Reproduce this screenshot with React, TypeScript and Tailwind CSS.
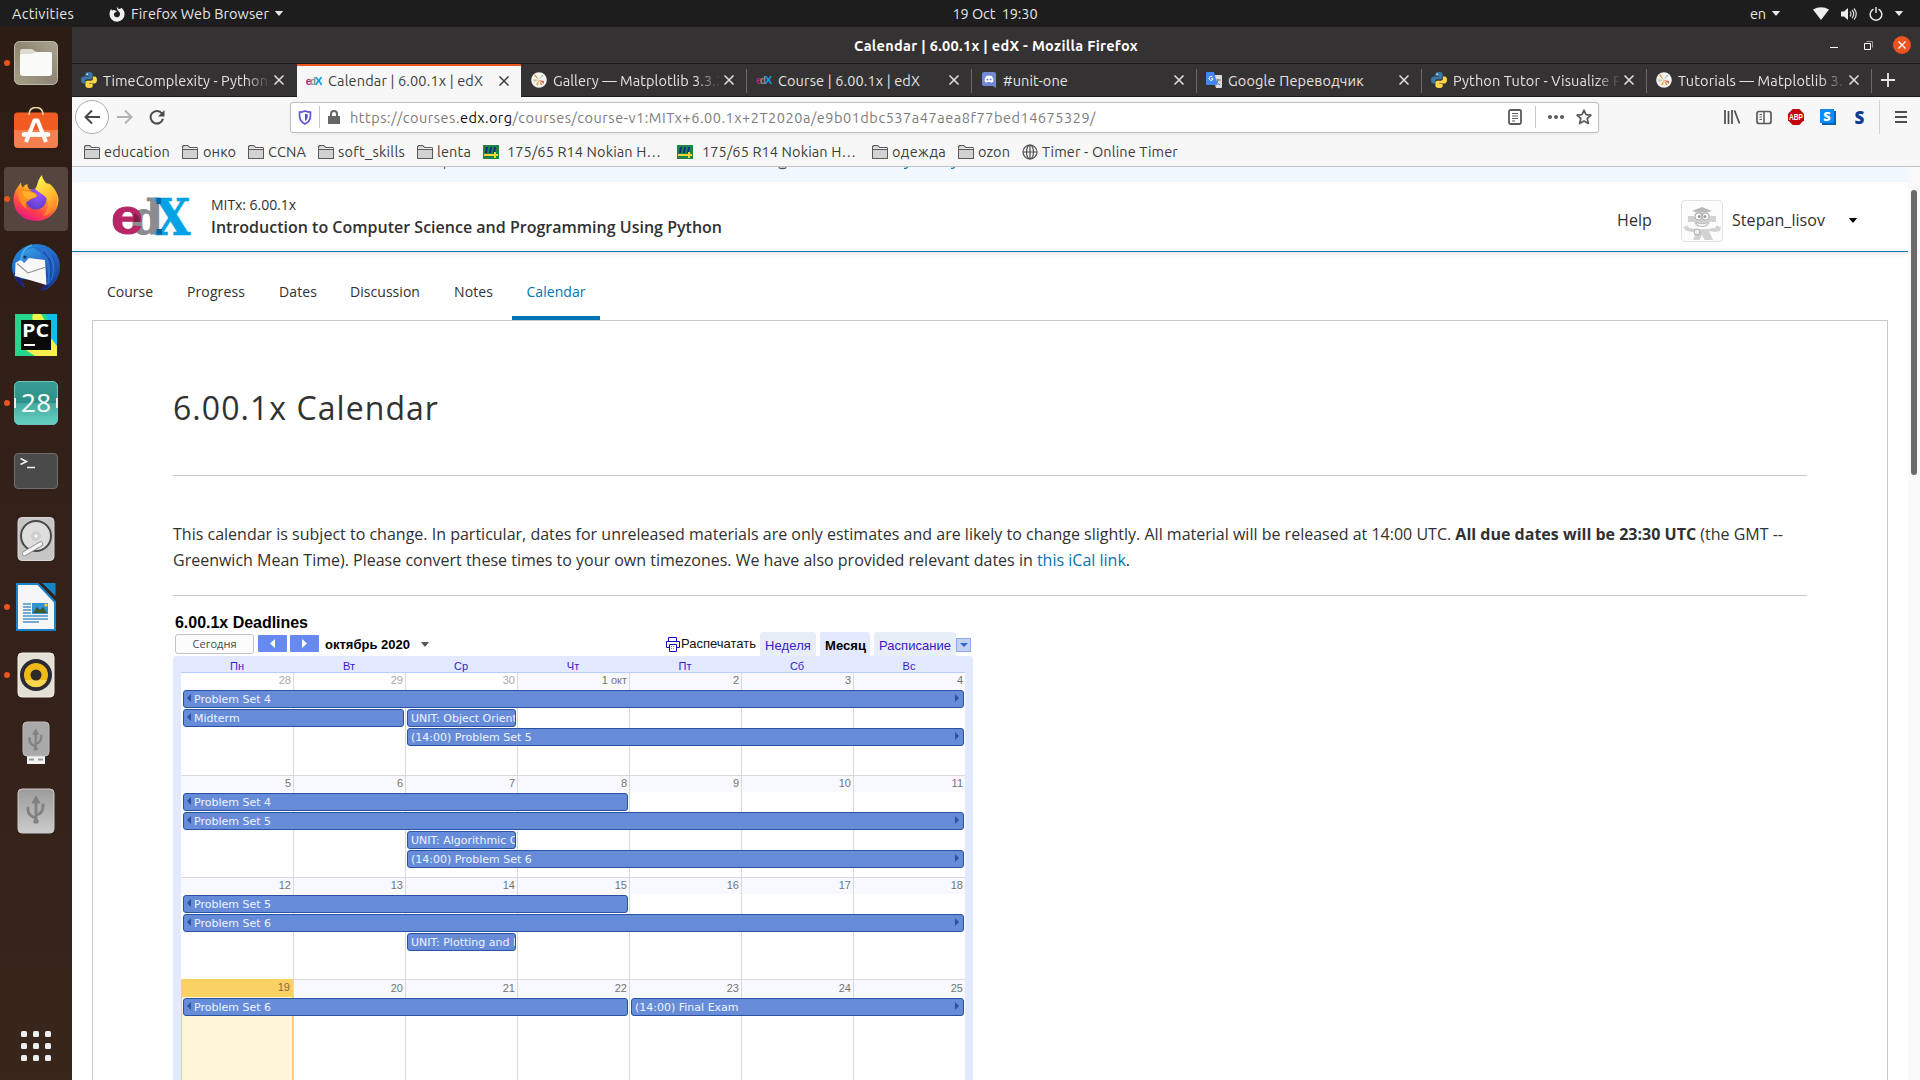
import React, { useLayoutEffect, useRef, type ReactNode } from "react";

/** One line of text, tracked so that it spans the given width. */
function Fit({ w, className = "", children }: { w: number; className?: string; children: ReactNode }) {
  const ref = useRef<HTMLSpanElement>(null);
  useLayoutEffect(() => {
    const el = ref.current;
    if (!el) return;
    el.style.letterSpacing = "0px";
    const n = (el.textContent ?? "").length;
    const natural = el.getBoundingClientRect().width;
    el.style.letterSpacing = `${(w - natural) / n}px`;
  }, [w]);
  return (
    <span ref={ref} className={`inline-block shrink-0 whitespace-pre ${className}`}>
      {children}
    </span>
  );
}

const Caret = ({ className = "" }: { className?: string }) => (
  <svg viewBox="0 0 10 6" className={`h-[5px] w-[10px] shrink-0 ${className}`} fill="currentColor">
    <path d="M0 0h10L5 6z" />
  </svg>
);

/* ---------- top bar ---------- */

function TopBar() {
  return (
    <div className="grid h-[27px] shrink-0 grid-cols-3 items-center bg-[#1d1d1d] text-[14.5px] leading-[27px] text-[#e6e6e6]">
      <div className="flex items-center pl-3">
        <Fit w={62}>Activities</Fit>
        <svg viewBox="0 0 16 16" className="ml-[35px] h-4 w-4" fill="#eee">
          <path d="M8 .5c.3 1.400 1 2 2.200 2.600C11.600 2.500 12.600 2 12.600 2c1.900 1.500 3 3.600 3 6.200A7.500 7.500 0 0 1 8 15.700 7.500 7.500 0 0 1 .5 8.200c0-2 .5-4 1.900-5.200.1.900.5 1.300.9 1.600C3.900 4 5 3.900 6 4.400L8 5 6.600 6.300l-1.200.8c-.6.9-.6 2.300.2 3.200 1.200 1.300 3.800 1.200 4.900-.4.9-1.500.6-3.400-.6-4.500C8.400 4.200 7.500 2.500 8 .5z" />
        </svg>
        <Fit w={138} className="ml-[6px]">Firefox Web Browser</Fit>
        <Caret className="ml-[5px]" />
      </div>
      <div className="flex justify-center pl-[72px]">
        <div className="-ml-[1px]"><Fit w={85} className="mr-[1px]">19 Oct  19:30</Fit></div>
      </div>
      <div className="flex items-center justify-end pr-[16px]">
        <Fit w={16}>en</Fit>
        <Caret className="ml-[5px]" />
        <svg viewBox="0 0 16 13" className="ml-8 h-[13px] w-4" fill="#eee"><path d="M0 2.500Q8-2 16 2.500L8 13z" /></svg>
        <svg viewBox="0 0 16 14" className="ml-3 h-[14px] w-4" fill="#eee">
          <path d="M0 4.500h3L7 1v12L3 9.500H0z" />
          <path d="M9 4.500q2 2.500 0 5M11 3q3.500 4 0 8M13 1.500q4.500 5.500 0 11" fill="none" stroke="#ddd" strokeWidth="1.200" />
        </svg>
        <svg viewBox="0 0 14 14" className="ml-3 h-[14px] w-[14px]" fill="none" stroke="#eee" strokeWidth="1.400">
          <path d="M4.500 2.200a5.800 5.800 0 1 0 5 0M7 0v6" />
        </svg>
        <Caret className="ml-[11px]" />
      </div>
    </div>
  );
}

/* ---------- dock ---------- */

const FilesIcon = () => (
  <svg viewBox="0 0 48 48" className="h-12 w-12">
    <defs><linearGradient id="fi" x1="0" y1="1" x2="1" y2="0"><stop stopColor="#a6a08a" /><stop offset=".5" stopColor="#8e8673" /><stop offset="1" stopColor="#aaa592" /></linearGradient></defs>
    <rect x="2.500" y="2.500" width="43" height="43" rx="5" fill="url(#fi)" stroke="#bdb8a8" />
    <path d="M8 12a2 2 0 0 1 2-2h10l4 3h14a2 2 0 0 1 2 2v4H8z" fill="#dedad0" />
    <path d="M8 17q0-2 2-2h10l4-2h14q2 0 2 2v19q0 3-3 3H11q-3 0-3-3z" fill="#fafaf9" />
  </svg>
);
const SoftwareIcon = () => (
  <svg viewBox="0 0 48 48" className="h-12 w-12">
    <path d="M2 9q0-3.500 3.500-3.500h37Q46 5.500 46 9v17H2z" fill="#f25c22" />
    <path d="M2 23h44v14q0 4-4 4H6q-4 0-4-4z" fill="#f48052" />
    <path d="M17 8q0-7.500 7-7.500T31 8" fill="none" stroke="#ecd5a8" strokeWidth="1.600" />
    <path d="M14 35 22.500 13.500h3L34 35M12 27.500h24" fill="none" stroke="#fff" strokeWidth="4" strokeLinejoin="round" />
    <path d="M12 27.500h24" stroke="#fff" strokeWidth="4.500" strokeLinecap="round" />
  </svg>
);
const FirefoxIcon = () => (
  <svg viewBox="0 1 48 48" className="h-12 w-12">
    <defs>
      <linearGradient id="ff1" x1=".8" y1=".1" x2=".3" y2="1"><stop stopColor="#fff04a" /><stop offset=".35" stopColor="#ff9a26" /><stop offset=".7" stopColor="#ff4048" /><stop offset="1" stopColor="#e3158d" /></linearGradient>
      <radialGradient id="ff2" cx=".6" cy=".3" r=".7"><stop stopColor="#9a55ff" /><stop offset="1" stopColor="#5b3fc6" /></radialGradient>
      <linearGradient id="ff3" x1=".3" y1="0" x2=".8" y2="1"><stop stopColor="#fff44f" /><stop offset=".6" stopColor="#ffb52b" /><stop offset="1" stopColor="#ff6a30" /></linearGradient>
    </defs>
    <path d="M9 8.500c.3 3 .8 4 2 5 1.500-2.500 2.500-3 4.500-3.500-.3 2 .5 4 2 5.500L40 14c4 3 6.500 7 6.500 12.500A22.500 21 0 0 1 24 47 22 21 0 0 1 1.500 26C1.500 18 5 14 9 8.500z" fill="url(#ff1)" />
    <circle cx="24" cy="25" r="10.500" fill="url(#ff2)" />
    <path d="M30 1c0 3 2 5 4 8 2 1 3 0 5 2 7 6 8 15 4 22-2 4-6 8-12 9 5-5 6-12 4-17-3-5-8-6-12-10 3-3 2-9 7-14z" fill="url(#ff3)" />
    <path d="M7 14c6 2 8 1 14 4 2 1 4 2 4 4-2 3-7 2-8 5-4 0-4 5-2 8-7-4-10-13-8-21z" fill="#ff8f20" />
    <path d="M10 17c5 0 12 1 15 5-3 2-6 1-8 3-3 0-6-3-7-8z" fill="#ffb02b" />
  </svg>
);
const ThunderbirdIcon = () => (
  <svg viewBox="0 0 48 48" className="h-12 w-12">
    <defs>
      <linearGradient id="tb" x1=".2" y1="0" x2=".8" y2="1"><stop stopColor="#2489d8" /><stop offset=".5" stopColor="#2363c4" /><stop offset="1" stopColor="#173a92" /></linearGradient>
      <linearGradient id="tb2" x1="0" y1="0" x2="1" y2="1"><stop stopColor="#3aa3e6" /><stop offset="1" stopColor="#2467c6" /></linearGradient>
    </defs>
    <path d="M24 1C10 2 1 11 0 23c0 9 5 18 13 22l-4-9 26 2-4 10c10-4 17-13 17-24C48 10 37 1 24 1z" fill="url(#tb)" />
    <path d="M2 29q1 12 12 17-4-4-4-9z" fill="#22206e" />
    <path d="M33 38q-2 7-6 10 6-1 10-5z" fill="#1f2476" />
    <path d="M9 20C8 10 14 5 24 5q7 5 10 13c-6-3-14-4-19-1-2 1-4 2-6 3z" fill="url(#tb2)" />
    <path d="M22 5c12-1 22 8 22 18 0 8-3 14-9 19 1-9 2-16-2-24C31 12 27 8 22 5z" fill="#2a6fce" />
    <path d="M3.500 20 9 16.500l3 3.500 5-5L33 17l1.500 25Q18 37 3 33z" fill="#f8f8f8" />
    <path d="M5 20.500 16 30l18-6" fill="none" stroke="#8d8d92" strokeWidth="1.100" />
    <path d="M36 14q7 9 2 24M40 12q6 10 1 24M31 9q10 7 7 26" fill="none" stroke="#1a4aa8" strokeWidth="1.100" />
    <path d="M9 18Q9 6 20 2" fill="none" stroke="#4ab0ee" strokeWidth="1.500" />
    <circle cx="13" cy="14" r="1.600" fill="#123a6e" />
  </svg>
);
const PyCharmIcon = () => (
  <svg viewBox="0 0 48 48" className="h-12 w-12">
    <path d="M3 3h42v42H3z" fill="#25d68c" />
    <path d="M20 3h9L45 30v15H24z" fill="#eef54a" />
    <path d="M34 3h11v34z" fill="#0cc0ea" />
    <path d="M3 45 12 36h27l6-10v19z" fill="#f7f04c" />
    <path d="M45 3v32l-6-8V3z" fill="#0cc0ea" />
    <path d="M3 3h18L9 40l-6 5z" fill="#25d68c" />
    <path d="M3 45V32l20 13z" fill="#25d68c" />
    <path d="M9 9h30v30H9z" fill="#0a0a0a" />
    <text x="10" y="26" fontSize="18" fontWeight="700" textLength="27" lengthAdjust="spacingAndGlyphs" fill="#fff" fontFamily="Open Sans, sans-serif">PC</text>
    <path d="M12 33h11v2H12z" fill="#fff" />
  </svg>
);
const CalendarIcon = () => (
  <svg viewBox="0 0 48 48" className="h-12 w-12">
    <defs><linearGradient id="ca" x1="0" y1="0" x2="0" y2="1"><stop stopColor="#379d94" /><stop offset=".5" stopColor="#2e9088" /><stop offset=".5" stopColor="#46a99f" /><stop offset="1" stopColor="#64d1c0" /></linearGradient></defs>
    <rect x="2.500" y="2.500" width="43" height="43" rx="4.500" fill="url(#ca)" stroke="#6cc4ba" />
    <path d="M2 19h2v10H2zM44 19h2v10h-2z" fill="#e6eeee" />
    <text x="24" y="33" textAnchor="middle" fontSize="26" textLength="30" fill="#f3fbfa" fontFamily="Noto Sans, sans-serif">28</text>
  </svg>
);
const TerminalIcon = () => (
  <svg viewBox="0 0 48 48" className="h-12 w-12">
    <rect x="2.500" y="6.500" width="43" height="35" rx="3.500" fill="#4a4a4a" stroke="#6e6e6e" />
    <path d="m8.500 11.500 6 3-6 3M15 20.500h8" fill="none" stroke="#f2f2f2" strokeWidth="1.600" />
  </svg>
);
const DiskIcon = () => (
  <svg viewBox="0 0 48 48" className="h-12 w-12">
    <rect x="6" y="2.500" width="36" height="43" rx="4" fill="#c6c6c6" stroke="#d9d9d9" />
    <circle cx="24" cy="21" r="15" fill="#dededc" stroke="#484848" strokeWidth="2" />
    <circle cx="24" cy="21" r="5" fill="#cfcfcf" /><circle cx="24" cy="21" r="1.500" fill="#fff" />
    <path d="m12.500 38.500 16-9.500" stroke="#888" strokeWidth="5" strokeLinecap="round" />
    <path d="m12.500 38.500 16-9.500" stroke="#f4f4f4" strokeWidth="3.600" strokeLinecap="round" />
  </svg>
);
const WriterIcon = () => (
  <svg viewBox="0 0 48 48" className="h-12 w-12">
    <path d="M5 1h21l17 18v28H5z" fill="#f6f6f8" stroke="#1a83c8" strokeWidth="2" />
    <path d="M30 0h13.500v13z" fill="#1585c9" />
    <path d="M11 21h8M11 24h8M11 27h8M11 30h8M11 33h25M11 36h25M11 39h16" stroke="#4a92c6" strokeWidth="1.400" />
    <path d="M20 20h16v11H20z" fill="#3592ce" />
    <path d="m21 30 4-6 3 3 3-3 4 6z" fill="#3b5a31" />
    <circle cx="34" cy="22" r="1.600" fill="#f5d33c" />
  </svg>
);
const RhythmboxIcon = () => (
  <svg viewBox="0 0 48 48" className="h-12 w-12">
    <rect x="6" y="2" width="36" height="44" rx="4" fill="#e4e0d5" stroke="#f0ede4" />
    <circle cx="24" cy="24" r="16" fill="#2a2b33" />
    <circle cx="24" cy="24" r="12" fill="#efb916" />
    <path d="M13 29a12 12 0 0 0 22 0z" fill="#f9d650" />
    <circle cx="24" cy="24" r="5.500" fill="#2d2b27" />
  </svg>
);
const UsbGlyph = () => (
  <g fill="none" stroke="#828282" strokeWidth="3">
    <path d="M24 14v20M24 31q-8-2-8-9M24 28q7-1 7-9" />
    <path d="m24 9 4 7h-8zM22 33h4v3h-4zM15 20h2v2h-2zM30 17h2v2h-2z" fill="#828282" strokeWidth="1" />
  </g>
);
const UsbStickIcon = () => (
  <svg viewBox="0 0 48 48" className="h-12 w-12">
    <path d="M15 37h18v8H15z" fill="#f3f3f3" />
    <path d="M17 39.500h5v2h-5zM26 39.500h5v2h-5z" fill="#999" />
    <rect x="11" y="3" width="26" height="34" rx="4" fill="#a9a9a9" stroke="#bdbdbd" />
    <g transform="translate(5 3) scale(.78)"><UsbGlyph /></g>
  </svg>
);
const UsbDriveIcon = () => (
  <svg viewBox="0 0 48 48" className="h-12 w-12">
    <defs><linearGradient id="ud" x1="0" y1="0" x2="0" y2="1"><stop stopColor="#9c9c9c" /><stop offset="1" stopColor="#cbcbcb" /></linearGradient></defs>
    <rect x="6" y="2" width="36" height="44" rx="4" fill="url(#ud)" stroke="#c8c8c8" />
    <UsbGlyph />
  </svg>
);

const dock: { Icon: () => ReactNode; running?: boolean; active?: boolean }[] = [
  { Icon: FilesIcon, running: true },
  { Icon: SoftwareIcon },
  { Icon: FirefoxIcon, running: true, active: true },
  { Icon: ThunderbirdIcon },
  { Icon: PyCharmIcon },
  { Icon: CalendarIcon, running: true },
  { Icon: TerminalIcon },
  { Icon: DiskIcon },
  { Icon: WriterIcon, running: true },
  { Icon: RhythmboxIcon, running: true },
  { Icon: UsbStickIcon },
  { Icon: UsbDriveIcon },
];

function Dock() {
  return (
    <div className="flex w-[72px] shrink-0 flex-col items-center bg-linear-to-b from-[#2d1c14] via-[#33211a] to-[#38261b] pt-[2px]">
      {dock.map(({ Icon, running, active }, i) => (
        <div key={i} className="relative flex h-[68px] w-full items-center justify-center">
          {active && <div className="absolute inset-x-1 inset-y-[2px] rounded bg-[#55453e]" />}
          {running && <div className="absolute left-1 h-[6px] w-[6px] rounded-full bg-[#e95420]" />}
          <div className="relative"><Icon /></div>
        </div>
      ))}
      <div className="mt-auto mb-[19px] grid grid-cols-3 gap-[6px]">
        {Array.from({ length: 9 }, (_, i) => (
          <div key={i} className="h-[6px] w-[6px] rounded-[1.500px] bg-[#eee]" />
        ))}
      </div>
    </div>
  );
}

/* ---------- browser window ---------- */

const PythonIcon = () => (
  <svg viewBox="0 0 16 16" className="h-4 w-4 shrink-0">
    <path d="M8 0C4.500 0 4.300 1 4.300 2.200V4H8v.6H2.500C1 4.600 0 6 0 8s.8 3.400 2.200 3.400H4V9.500C4 8.200 5 7.200 6.200 7.200h3.600c1 0 1.800-.8 1.800-1.800V2.200C11.600 1 10.800 0 8 0z" fill="#3b77a8" />
    <path d="M8 16c3.500 0 3.700-1 3.700-2.200V12H8v-.6h5.500C15 11.400 16 10 16 8s-.8-3.400-2.200-3.400H12v1.900c0 1.300-1 2.300-2.200 2.300H6.200c-1 0-1.800.8-1.800 1.800v3.200C4.400 15 5.200 16 8 16z" fill="#ffd545" />
    <circle cx="6.200" cy="2.200" r=".8" fill="#fff" />
  </svg>
);
const EdxMini = () => (
  <svg viewBox="0 0 16 16" className="h-4 w-4 shrink-0" fontWeight="700">
    <text x="-.3" y="12" fontSize="10" textLength="6" lengthAdjust="spacingAndGlyphs" fill="#b3246b" fontFamily="Liberation Sans, sans-serif">e</text>
    <text x="4" y="12" fontSize="10" textLength="6" lengthAdjust="spacingAndGlyphs" fill="#8a8c8f" fontFamily="Liberation Sans, sans-serif">d</text>
    <text x="8.500" y="12" fontSize="11" textLength="8" lengthAdjust="spacingAndGlyphs" fill="#0a9bdc" fontFamily="Liberation Sans, sans-serif">X</text>
  </svg>
);
const MatplotIcon = () => (
  <svg viewBox="0 0 16 16" className="h-4 w-4 shrink-0">
    <circle cx="8" cy="8" r="7.800" fill="#f3f3f0" />
    <path d="M8 8 3 3.500 4.500 2.500z" fill="#e0913c" /><path d="M8 8 2 7l1 3z" fill="#c8c9a0" />
    <path d="m8 8 5 4 0-3z" fill="#d76a4a" /><path d="m8 8 4.500-5-2 0z" fill="#9bbfae" />
    <path d="M8 8 5 12.500l2 1z" fill="#ef9f3d" /><path d="m8 8 2 5.500 1.500-1z" fill="#e67f3a" />
  </svg>
);
const DiscordIcon = () => (
  <svg viewBox="0 0 16 16" className="h-4 w-4 shrink-0">
    <path d="M3 0h10q2 0 2 2v14l-3-2H3q-2 0-2-2V2q0-2 2-2z" fill="#7289da" />
    <path d="M5 4q3-1 6 0 1.500 2.500 1.300 5.500-1 1-2.300 1.200L9.500 10h-3l-.6.700Q4.600 10.500 3.700 9.500 3.500 6.500 5 4z" fill="#fff" />
    <circle cx="6.500" cy="7.500" r="1" fill="#7289da" /><circle cx="9.600" cy="7.500" r="1" fill="#7289da" />
  </svg>
);
const TranslateIcon = () => (
  <svg viewBox="0 0 16 16" className="h-4 w-4 shrink-0">
    <path d="M6 3h9q1 0 1 1v11q0 1-1 1h-5z" fill="#dcdcdc" />
    <path d="M9 8h6M12 7v1q0 3-3 5M10 9q1 2 4 4" stroke="#607988" fill="none" strokeWidth="1" />
    <path d="M1 0h7l3.500 13H1q-1 0-1-1V1q0-1 1-1z" fill="#4285f4" />
    <path d="M6.500 5A2 2 0 1 0 7 6.800H5" fill="none" stroke="#fff" />
  </svg>
);
const CloseX = () => (
  <svg viewBox="0 0 10 10" className="h-[10px] w-[10px] shrink-0" stroke="currentColor" strokeWidth="1.500"><path d="m.5.5 9 9m0-9-9 9" /></svg>
);

const tabs: { Icon: () => ReactNode; title: string; w: number; active?: boolean; sep?: boolean; fade?: boolean }[] = [
  { Icon: PythonIcon, title: "TimeComplexity - Python", w: 165, fade: true },
  { Icon: EdxMini, title: "Calendar | 6.00.1x | edX", w: 155, active: true },
  { Icon: MatplotIcon, title: "Gallery — Matplotlib 3.3.2", w: 171, sep: true, fade: true },
  { Icon: EdxMini, title: "Course | 6.00.1x | edX", w: 142, sep: true },
  { Icon: DiscordIcon, title: "#unit-one", w: 65, sep: true },
  { Icon: TranslateIcon, title: "Google Переводчик", w: 136, sep: true },
  { Icon: PythonIcon, title: "Python Tutor - Visualize Py", w: 176, sep: true, fade: true },
  { Icon: MatplotIcon, title: "Tutorials — Matplotlib 3.3", w: 173, sep: true, fade: true },
];

function TabStrip() {
  return (
    <div className="flex h-[34px] border-t border-b border-[#1b1a1a] bg-[#353233] text-[14.500px]">
      {tabs.map(({ Icon, title, w, active, sep, fade }) => (
        <div
          key={title}
          className={
            active
              ? "relative -mb-px flex w-[224px] items-center bg-[#f7f7f7] pl-[9px] text-[#3d3d3d] shadow-[inset_0_2px_0_#e95420]"
              : "relative flex w-[225px] items-center pl-[9px] text-[#e4e2e0] nth-3:ml-[1px] nth-3:w-[225px]"
          }
        >
          <Icon />
          <div
            className={
              "ml-[6px] w-[166px] overflow-hidden" +
              (active ? "" : " pt-[2px]") +
              (fade ? " [mask-image:linear-gradient(to_right,#000_86%,transparent_101%)]" : "")
            }
          >
            <Fit w={w} className="align-top leading-[24px]">{title}</Fit>
          </div>
          <div className="ml-[5px]"><CloseX /></div>
          {sep && <div className="absolute right-0 top-[5px] h-6 w-px bg-[#6b696a]" />}
        </div>
      ))}
      <svg viewBox="0 0 14 14" className="mt-[9px] ml-[9px] h-[14px] w-[14px]" stroke="#e8e8e8" strokeWidth="1.800"><path d="M7 0v14M0 7h14" /></svg>
    </div>
  );
}

function Toolbar() {
  return (
    <div className="flex h-10 items-center bg-[#f7f7f7]">
      <div className="ml-[3px] flex h-[34px] w-[34px] items-center justify-center rounded-full border border-[#adadad] bg-white">
        <svg viewBox="0 0 16 16" className="h-4 w-4" fill="none" stroke="#4a4a4a" strokeWidth="2"><path d="M16 8H1.500M8 1.500 1.500 8 8 14.500" /></svg>
      </div>
      <svg viewBox="0 0 16 16" className="ml-2 h-4 w-4" fill="none" stroke="#b3b3b3" strokeWidth="2"><path d="M0 8h14.500M8 1.500 14.500 8 8 14.500" /></svg>
      <svg viewBox="0 0 16 16" className="ml-4 h-4 w-4" fill="none" stroke="#4a4a4a" strokeWidth="2">
        <path d="M13 4.500A6.300 6.300 0 1 0 14 9.800" /><path d="M15.500 1v6.500H9z" fill="#4a4a4a" stroke="none" />
      </svg>
      <div className="ml-[125px] flex h-[31px] w-[1309px] items-center rounded-[3px] border border-[#bfbfbf] bg-white shadow-[0_1px_3px_#0001]">
        <svg viewBox="0 0 14 16" className="ml-[7px] h-[15px] w-[14px]">
          <path d="M7 1q3 1.200 5.800 1.200v4q0 6-5.800 8.800Q1.200 12.200 1.200 6.200v-4Q4 2.200 7 1z" fill="none" stroke="#5a57d8" strokeWidth="1.800" />
          <path d="M7 4q1.500.6 3 .7v2Q9.800 10 7 12z" fill="#5648d8" />
        </svg>
        <div className="ml-[7px] h-[22px] w-px bg-[#c8c8c8]" />
        <svg viewBox="0 0 12 14" className="ml-[8px] h-[14px] w-3"><path d="M0 6h12v8H0z" fill="#666" /><path d="M3 7V4a3 3 0 0 1 6 0v3" fill="none" stroke="#666" strokeWidth="2" /></svg>
        <div className="ml-[10px] flex pt-px text-[14.500px] leading-[30px] text-[#7c7c7c]">
          <Fit w={110}>https://courses.</Fit>
          <Fit w={52.5} className="text-[#0c0c0d]">edx.org</Fit>
          <Fit w={583.5}>/courses/course-v1:MITx+6.00.1x+2T2020a/e9b01dbc537a47aea8f77bed14675329/</Fit>
        </div>
        <div className="mr-[6px] ml-auto flex items-center">
          <svg viewBox="0 0 14 16" className="h-4 w-[14px]" fill="none" stroke="#5a5a5a"><rect x="1" y="1" width="12" height="14" rx="1.500" strokeWidth="1.800" /><path d="M4 4.500h6M4 7h6M4 9.500h6M4 12h3" /></svg>
          <div className="ml-[13px] h-[22px] w-px bg-[#c8c8c8]" />
          <svg viewBox="0 0 16 4" className="ml-3 h-1 w-4" fill="#5a5a5a"><circle cx="2" cy="2" r="2" /><circle cx="8" cy="2" r="2" /><circle cx="14" cy="2" r="2" /></svg>
          <svg viewBox="0 0 16 16" className="ml-3 h-4 w-4" fill="none" stroke="#5a5a5a" strokeWidth="1.700" strokeLinejoin="round"><path d="m8 1.200 2 4.500 5 .5-3.800 3.300 1.200 5L8 12l-4.400 2.500 1.200-5L1 6.200l5-.5z" /></svg>
        </div>
      </div>
      <svg viewBox="0 0 16 14" className="ml-[125px] h-[14px] w-4" fill="none" stroke="#4d4d4d" strokeWidth="1.700"><path d="M1 0v14M4.500 1v13M8 0v14M10.500.5l5 13" /></svg>
      <svg viewBox="0 0 16 14" className="ml-4 h-[15px] w-4" fill="none" stroke="#5a5a5a"><rect x="1" y="1" width="14" height="12" rx="2" strokeWidth="1.700" /><path d="M8 1v12" strokeWidth="1.500" /><path d="M3.500 4H6M3.500 6.500H6M3.500 9H6" /></svg>
      <svg viewBox="0 0 16 16" className="ml-4 h-4 w-4"><path d="M4.700 0h6.600L16 4.700v6.600L11.300 16H4.700L0 11.300V4.700z" fill="#c4040c" /><text x="8" y="11.300" textAnchor="middle" fontSize="9" fontWeight="700" textLength="14" lengthAdjust="spacingAndGlyphs" fill="#fff" fontFamily="Liberation Sans, sans-serif">ABP</text></svg>
      <svg viewBox="0 0 16 16" className="ml-4 h-4 w-4"><path d="M2 2h14v14H2z" fill="#0861b0" /><path d="M0 0h14v14H0z" fill="#0a8cff" /><text x="7" y="11.500" textAnchor="middle" fontSize="13" fontWeight="800" fill="#fff" fontFamily="Open Sans, sans-serif">S</text></svg>
      <span className="ml-[18px] w-[11px] text-center font-['Open_Sans'] text-[17px] leading-none font-extrabold text-[#0b3d91]">S</span>
      <div className="ml-[14px] h-[34px] w-px bg-[#d2d2d2]" />
      <svg viewBox="0 0 12 12" className="ml-[15px] h-3 w-3" stroke="#4d4d4d" strokeWidth="2"><path d="M0 1h12M0 6h12M0 11h12" /></svg>
    </div>
  );
}

const FolderMark = () => (
  <svg viewBox="0 0 16 14" className="h-[14px] w-4 shrink-0"><path d="M.5 13.500V2Q.5.500 2 .5h4l1.500 2h7q1 0 1 1v10z" fill="#d2d2d2" stroke="#595959" /><path d="M1 3.500h6.500V2l7.500 1v1.500H1z" fill="#f7f7f7" /><path d="M.5 13.500V2Q.5.500 2 .5h4l1.500 2h7q1 0 1 1v10zM.5 4.500h15" fill="none" stroke="#595959" /></svg>
);
const TyreMark = () => (
  <svg viewBox="0 0 16 14" className="h-[14px] w-4 shrink-0"><path d="M0 0h16v14H0z" fill="#1c8444" /><path d="m3 2-1 6h2l1-6zm4 0L6 8h2l1-6zm4 0-1 6h2l1-6z" fill="#152c86" /><path d="M1 9h10V7h2v2h2v2h-2v2h-2v-2H1z" fill="#f5d338" /></svg>
);
const GlobeMark = () => (
  <svg viewBox="0 0 16 16" className="h-4 w-4 shrink-0" fill="none" stroke="#4d4d4d" strokeWidth="1.200"><circle cx="8" cy="8" r="7" /><ellipse cx="8" cy="8" rx="3.500" ry="7" /><path d="M1 8h14M8 1v14" /></svg>
);

const bookmarks: [() => ReactNode, string, number, string, string][] = [
  [FolderMark, "education", 66, "ml-3", "ml-1"],
  [FolderMark, "онко", 33, "ml-3", "ml-[5px]"],
  [FolderMark, "CCNA", 38, "ml-3", "ml-1"],
  [FolderMark, "soft_skills", 67, "ml-3", "ml-1"],
  [FolderMark, "lenta", 34, "ml-3", "ml-1"],
  [TyreMark, "175/65 R14 Nokian H…", 154, "ml-3", "ml-2"],
  [TyreMark, "175/65 R14 Nokian H…", 154, "ml-4", "ml-[9px]"],
  [FolderMark, "одежда", 54, "ml-4", "ml-1"],
  [FolderMark, "ozon", 32, "ml-3", "ml-1"],
  [GlobeMark, "Timer - Online Timer", 136, "ml-3", "ml-1"],
];

function Bookmarks() {
  return (
    <div className="flex h-[30px] items-center border-b border-[#c2c2c2] bg-[#f7f7f7] text-[14.500px] leading-[29px] text-[#3d3d3d]">
      {bookmarks.map(([Icon, label, w, gap, inner], i) => (
        <div key={i} className={`flex items-center ${gap}`}>
          <Icon />
          <Fit w={w} className={inner}>{label}</Fit>
        </div>
      ))}
    </div>
  );
}

/* ---------- course page ---------- */

const EdxLogo = () => (
  <svg viewBox="0 0 78 38" className="h-[38px] w-[78px] shrink-0 overflow-visible" fontWeight="700">
    <text x="18" y="36" fontSize="47" textLength="32" lengthAdjust="spacingAndGlyphs" fill="#8a8c8f" stroke="#8a8c8f" strokeWidth="1" fontFamily="DejaVu Serif, serif">d</text>
    <text x="-2" y="36" fontSize="50" textLength="32" lengthAdjust="spacingAndGlyphs" fill="#b72667" stroke="#b72667" strokeWidth="1" fontFamily="Liberation Sans, sans-serif">e</text>
    <text x="41.500" y="36.500" fontSize="49.500" textLength="36" lengthAdjust="spacingAndGlyphs" fill="#02a2e4" stroke="#02a2e4" strokeWidth=".6" fontFamily="DejaVu Serif, serif">X</text>
    <path d="M21.500 15.500q5.500 2 5.500 8.500h-6q-.8-4 .5-8.500z" fill="#7d1f42" />
    <path d="M43.500 31h5.500v5.500h-5.500zM43.500 0H48v6h-4.500z" fill="#0463a0" />
  </svg>
);

const Avatar = () => (
  <svg viewBox="0 0 40 40" className="h-10 w-10" fill="#d2d2d2">
    <path d="m10 10 10-4 10 4-10 3z" fill="#b9b9b9" />
    <path d="M14 11h12l2 4h6v6h-6q-1 5-8 5t-8-5H6v-6h6z" />
    <circle cx="16.500" cy="15.500" r="3.500" fill="#fff" stroke="#aaa" /><circle cx="23.500" cy="15.500" r="3.500" fill="#fff" stroke="#aaa" />
    <circle cx="17.200" cy="15.500" r="1.500" fill="#999" /><circle cx="22.800" cy="15.500" r="1.500" fill="#999" />
    <path d="M14 21.500q6 3 12 0-1 4-6 4t-6-4z" fill="#fff" stroke="#aaa" strokeWidth=".7" />
    <path d="M1 25l2 1 2-2 2 3 7 1h12l7-1 2-3 2 2 2-1-1 5-5 1-6-1 4 9H11l3-9-5 1-6-2z" />
    <circle cx="15" cy="31" r="3" fill="#eee" stroke="#aaa" />
    <path d="m20 34-2.500 5h5z" fill="#fff" />
  </svg>
);

const courseTabs: [string, number, string][] = [
  ["Course", 46, "ml-[35px]"],
  ["Progress", 58, "ml-[34px]"],
  ["Dates", 38, "ml-[34px]"],
  ["Discussion", 70, "ml-[33px]"],
  ["Notes", 39, "ml-[34px]"],
];

type CalEvent = { label: string; col: string; row: string; prev?: boolean; next?: boolean };
const weeks: { days: string[]; muted?: number; today?: boolean; events: CalEvent[] }[] = [
  {
    days: ["28", "29", "30", "1 окт", "2", "3", "4"],
    muted: 3,
    events: [
      { label: "Problem Set 4", col: "col-start-1 col-span-7", row: "row-start-1", prev: true, next: true },
      { label: "Midterm", col: "col-start-1 col-span-2", row: "row-start-2", prev: true },
      { label: "UNIT: Object Oriented", col: "col-start-3 col-span-1", row: "row-start-2" },
      { label: "(14:00) Problem Set 5", col: "col-start-3 col-span-5", row: "row-start-3", next: true },
    ],
  },
  {
    days: ["5", "6", "7", "8", "9", "10", "11"],
    events: [
      { label: "Problem Set 4", col: "col-start-1 col-span-4", row: "row-start-1", prev: true },
      { label: "Problem Set 5", col: "col-start-1 col-span-7", row: "row-start-2", prev: true, next: true },
      { label: "UNIT: Algorithmic Complexity", col: "col-start-3 col-span-1", row: "row-start-3" },
      { label: "(14:00) Problem Set 6", col: "col-start-3 col-span-5", row: "row-start-4", next: true },
    ],
  },
  {
    days: ["12", "13", "14", "15", "16", "17", "18"],
    events: [
      { label: "Problem Set 5", col: "col-start-1 col-span-4", row: "row-start-1", prev: true },
      { label: "Problem Set 6", col: "col-start-1 col-span-7", row: "row-start-2", prev: true, next: true },
      { label: "UNIT: Plotting and More", col: "col-start-3 col-span-1", row: "row-start-3" },
    ],
  },
  {
    days: ["19", "20", "21", "22", "23", "24", "25"],
    today: true,
    events: [
      { label: "Problem Set 6", col: "col-start-1 col-span-4", row: "row-start-1", prev: true },
      { label: "(14:00) Final Exam", col: "col-start-5 col-span-3", row: "row-start-1", next: true },
    ],
  },
];

function dayHead(isToday: boolean, isMuted: boolean, lastWeek: boolean) {
  if (isToday) return "h-[17px] bg-[#fad163] pr-[2px] leading-[14px] text-[#7d6f4c]";
  if (isMuted) return "h-4 pr-[2px] leading-[14px] text-[#aaa]";
  if (lastWeek) return "h-[17px] bg-[#f8f9ff] pr-[2px] leading-[16px] text-[#747474]";
  return "h-4 bg-[#f8f9ff] pr-[2px] leading-[14px] text-[#747474]";
}

function Calendar() {
  return (
    <div className="w-[800px] font-['Liberation_Sans',Arial,sans-serif] text-black">
      <div className="pt-[17px] pl-[2px] text-[16px] leading-[19px] font-bold"><Fit w={133}>6.00.1x Deadlines</Fit></div>
      <div className="flex h-6 pl-[2px]">
        <div className="mt-[2px] flex h-5 w-[79px] items-center justify-center rounded-[3px] border border-[#c3c3c3] bg-[#fcfcfc] font-['Open_Sans'] text-[11px] text-[#4a4a4a]"><Fit w={44}>Сегодня</Fit></div>
        <div className="mt-[3px] ml-1 flex h-[17px] w-[29px] items-center justify-center rounded-[1px] bg-[#668af0]"><svg viewBox="0 0 5 9" className="h-[9px] w-[5px]"><path d="M5 0v9L0 4.500z" fill="#fff" /></svg></div>
        <div className="mt-[3px] ml-[3px] flex h-[17px] w-[29px] items-center justify-center rounded-[1px] bg-[#668af0]"><svg viewBox="0 0 5 9" className="h-[9px] w-[5px]"><path d="M0 0v9l5-4.500z" fill="#fff" /></svg></div>
        <Fit w={85} className="ml-[6px] text-[13px] leading-[25px] font-bold">октябрь 2020</Fit>
        <Caret className="mt-[10px] ml-[10px] text-[#5a5a5a]" />
        <svg viewBox="0 0 14 15" className="mt-[5px] ml-[236px] h-[15px] w-[14px]" fill="#fff" stroke="#1010b8">
          <path d="M2.500 4V.5h8V4" /><path d="M.5 10.500v-6h13v6z" /><path d="M3.500 7.500h7v7h-7z" /><path d="M5 9.500h4M5 11.500h4" stroke="#8888aa" strokeDasharray="1 1" />
        </svg>
        <Fit w={75} className="ml-[1px] text-[13px] leading-6 text-[#111]">Распечатать</Fit>
        <div className="ml-[4px] flex text-[13px] leading-[27px] text-[#3b18c8]">
          <div className="w-14 rounded-t-[3px] bg-[#e8eef7] pl-[5px]"><Fit w={46}>Неделя</Fit></div>
          <div className="ml-1 w-[50px] rounded-t-[3px] bg-[#e3e9ff] pl-[5px] font-bold text-black"><Fit w={41}>Месяц</Fit></div>
          <div className="ml-1 w-[82px] rounded-t-[3px] bg-[#e8eef7] pl-[5px]"><Fit w={72}>Расписание</Fit></div>
        </div>
        <div className="mt-[6px] flex h-[14px] w-[15px] items-center justify-center border border-[#8fa9e4] bg-[#c3d0ee]"><svg viewBox="0 0 8 4" className="h-1 w-2"><path d="M0 0h8L4 4z" fill="#2d66d2" /></svg></div>
      </div>
      <div className="rounded-t-[3px] bg-[#e3e9ff] px-2">
        <div className="grid h-[17px] grid-cols-7 border-b border-[#b8ccff] text-center text-[11px] leading-[21px] text-[#3b18c8]">
          {["Пн", "Вт", "Ср", "Чт", "Пт", "Сб", "Вс"].map((d) => <div key={d} className="h-4">{d}</div>)}
        </div>
        {weeks.map(({ days, muted = 0, today, events }, wi) => (
          <div key={wi} className={wi === 0 ? "relative h-[102px] bg-white" : "relative h-[102px] border-t border-[#d9d9dc] bg-white"}>
            <div className="absolute inset-0 grid grid-cols-7">
              {days.map((d, i) => {
                const isToday = Boolean(today) && i === 0;
                return (
                  <div key={d} className={isToday ? "-mt-px border border-[#fad163] bg-[#fff7d7]" : i > 0 ? "border-l border-[#d9d9dc]" : ""}>
                    <div className={`text-right text-[11px] ${dayHead(isToday, i < muted, Boolean(today))}`}>{d}</div>
                  </div>
                );
              })}
            </div>
            <div className={today ? "relative grid auto-rows-[19px] grid-cols-7 pt-[18px]" : "relative grid auto-rows-[19px] grid-cols-7 pt-[17px]"}>
              {events.map((e) => (
                <div
                  key={e.label}
                  className={`${e.col} ${e.row} relative mr-[1px] ml-[2px] h-[18px] overflow-hidden rounded-[3px] border border-[#2952a3] bg-[#668cd9] font-['DejaVu_Sans',Verdana,sans-serif] text-[11px] leading-[17px] whitespace-nowrap text-[#eef3ff] ${e.prev ? "pl-[10px]" : "pl-[3px]"}`}
                >
                  {e.prev && <svg viewBox="0 0 4 8" className="absolute top-[3px] left-[3px] h-2 w-1"><path d="M4 0v8L0 4z" fill="#2952a3" /></svg>}
                  {e.label}
                  {e.next && <svg viewBox="0 0 4 8" className="absolute top-[3px] right-1 h-2 w-1"><path d="M0 0v8l4-4z" fill="#2952a3" /></svg>}
                </div>
              ))}
            </div>
          </div>
        ))}
      </div>
    </div>
  );
}

function CoursePage() {
  return (
    <div className="min-w-0 flex-1 overflow-hidden bg-white font-['Open_Sans','Noto_Sans',sans-serif] text-[#313131]">
      <div className="h-[15px] overflow-hidden bg-[#f2f8ff]">
        <svg viewBox="0 0 1000 3" className="h-[3px] w-[1000px]" fill="none" strokeWidth="1.300">
          <path d="M372.500 0v2" stroke="#666" />
          <path d="M707 .3q0 1.200 3.500 1.200t3.500-1.200" stroke="#555" />
          <path d="M832 1.300h1.500q1.500 0 2-1.300M879 1.300h1.500q1.500 0 2-1.300" stroke="#0075b4" />
        </svg>
      </div>
      <div className="flex h-[70px] border-b border-[#0075b4] shadow-[0_2px_4px_#0000001a]">
        <div className="mt-4 ml-[41px]"><EdxLogo /></div>
        <div className="ml-[20px] flex flex-col pt-[11px]">
          <Fit w={85} className="self-start text-[14px] leading-[23px]">MITx: 6.00.1x</Fit>
          <Fit w={511} className="self-start text-[16px] leading-[22px] font-semibold">Introduction to Computer Science and Programming Using Python</Fit>
        </div>
        <div className="mr-[50px] ml-auto flex items-center pt-[8px]">
          <Fit w={35} className="-mt-[2px] text-[16px]">Help</Fit>
          <div className="ml-[29px] flex h-[42px] w-[42px] items-center justify-center rounded-[4px] border border-[#e2e2e2] bg-[#fcfcfc]"><Avatar /></div>
          <Fit w={93} className="-mt-[2px] ml-[9px] text-[16px]">Stepan_lisov</Fit>
          <Caret className="ml-[23px] text-black" />
        </div>
      </div>
      <div className="flex h-[68px] text-[14px] leading-[80px]">
        {courseTabs.map(([label, w, gap]) => <Fit key={label} w={w} className={gap}>{label}</Fit>)}
        <div className="ml-[19px] flex h-[68px] w-[88px] justify-center border-b-4 border-[#0075b4] text-[#0075b4]"><Fit w={59}>Calendar</Fit></div>
      </div>
      <div className="mr-5 ml-5 h-[900px] border border-[#c8c8c8] px-20 pt-[59px]">
        <h1 className="text-[32px] leading-[56px]"><Fit w={266}>6.00.1x Calendar</Fit></h1>
        <hr className="mt-[39px] border-[#c8c8c8]" />
        <p className="mt-[45px] text-[16px] leading-[26px]">
          <Fit w={1610}>This calendar is subject to change. In particular, dates for unreleased materials are only estimates and are likely to change slightly. All material will be released at 14:00 UTC. <b>All due dates will be 23:30 UTC</b> (the GMT --</Fit>
          <br />
          <Fit w={957}>Greenwich Mean Time). Please convert these times to your own timezones. We have also provided relevant dates in <span className="text-[#0075b4]">this iCal link</span>.</Fit>
        </p>
        <hr className="mt-[22px] border-[#c8c8c8]" />
        <Calendar />
      </div>
    </div>
  );
}

export default function App() {
  return (
    <div className="flex h-[1080px] w-[1920px] flex-col overflow-hidden font-['Ubuntu','Noto_Sans',sans-serif]">
      <TopBar />
      <div className="flex min-h-0 flex-1">
        <Dock />
        <div className="flex min-w-0 flex-1 flex-col">
          <div className="flex h-9 shrink-0 items-center bg-[#353233] text-[14.500px] font-bold text-white">
            <div className="flex-1 pt-[2px] pl-[782px]"><Fit w={284}>Calendar | 6.00.1x | edX - Mozilla Firefox</Fit></div>
            <div className="mt-[5px] h-px w-2 bg-white" />
            <svg viewBox="0 0 9 9" className="ml-[26px] h-[9px] w-[9px]" fill="none" stroke="#fff"><path d="M.5 2.500h6v6h-6z" /><path d="M2.500.5h6v6" stroke="#999" /></svg>
            <div className="mr-[9px] ml-[20px] flex h-[18px] w-[18px] items-center justify-center rounded-full bg-[#e95420]"><svg viewBox="0 0 8 8" className="h-2 w-2" stroke="#fff" strokeWidth="1.300"><path d="m.5.5 7 7m0-7-7 7" /></svg></div>
          </div>
          <TabStrip />
          <Toolbar />
          <Bookmarks />
          <div className="flex min-h-0 flex-1">
            <CoursePage />
            <div className="w-3 bg-[#f9f9fa] pt-[23px] pl-[3px]"><div className="h-[285px] w-[6px] rounded-full bg-[#6a6a6a]" /></div>
          </div>
        </div>
      </div>
    </div>
  );
}
